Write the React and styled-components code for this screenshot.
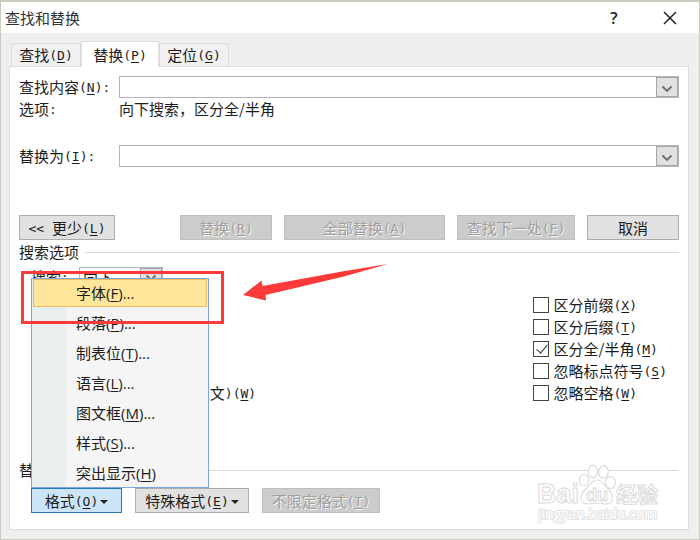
import React, { useState } from 'react';
import styled, { createGlobalStyle } from 'styled-components';

const FIND_OPTIONS = [
    { id: 'prefix', label: '区分前缀', hotkey: 'X' },
    { id: 'suffix', label: '区分后缀', hotkey: 'T' },
    { id: 'width', label: '区分全/半角', hotkey: 'M' },
    { id: 'punct', label: '忽略标点符号', hotkey: 'S' },
    { id: 'space', label: '忽略空格', hotkey: 'W' },
];

const MENU_ITEMS = [
    { label: '字体', hotkey: 'F', more: true },
    { label: '段落', hotkey: 'P', more: true },
    { label: '制表位', hotkey: 'T', more: true },
    { label: '语言', hotkey: 'L', more: true },
    { label: '图文框', hotkey: 'M', more: true },
    { label: '样式', hotkey: 'S', more: true },
    { label: '突出显示', hotkey: 'H' },
];

const Hotkey = ({ children }) => (
    <Latin>(<u>{children}</u>)</Latin>
);

const Combo = ({ id }) => (
    <StyledCombo>
        <input id={id} type="text" />
        <button type="button" aria-label="展开">
            <Chevron />
        </button>
    </StyledCombo>
);

const Chevron = () => (
    <svg width="12" height="8" viewBox="0 0 12 8">
        <path d="M1.5 1.5 L6 6 L10.5 1.5" fill="none" stroke="#6b6b6b" strokeWidth="1.8" />
    </svg>
);

const Check = ({ id, checked, onChange, children }) => (
    <StyledCheck>
        <input id={id} type="checkbox" checked={checked} onChange={onChange} />
        <label htmlFor={id}>{children}</label>
    </StyledCheck>
);

const Watermark = () => (
    <StyledWatermark viewBox="0 0 130 62" width="130" height="62">
        <g fill="#fff" stroke="#dcdcdc" strokeWidth="1.2">
            <ellipse cx="47" cy="18" rx="4.6" ry="6" />
            <ellipse cx="56" cy="9.5" rx="4.6" ry="6.3" />
            <ellipse cx="66.5" cy="10" rx="4.8" ry="6.3" />
            <ellipse cx="73.5" cy="20.5" rx="5" ry="6" />
            <path d="M60 18 C54 18 52 25 48 28 C42 33 43 42 51 42 C55 42 57 41 60 41 C64 41 65 42 69 42 C77 42 77 33 72 28 C68 25 66 18 60 18 Z" />
        </g>
        <g fill="#fff" stroke="#dadada" strokeWidth="1" fontWeight="700">
            <text x="0" y="41" fontSize="27" fontFamily="Liberation Sans, sans-serif">Bai</text>
            <text x="49" y="39" fontSize="18" fontFamily="Liberation Sans, sans-serif">du</text>
            <text x="79" y="40" fontSize="21" fontFamily="Noto Sans CJK SC, sans-serif">经验</text>
        </g>
        <text x="1" y="57" fontSize="14" fontFamily="Open Sans, sans-serif" fill="#fff" stroke="#e2e2e2" strokeWidth="2" paintOrder="stroke">jingyan.baidu.com</text>
    </StyledWatermark>
);

const App = () => {

    const [checked, setChecked] = useState({ width: true });
    const [active, setActive] = useState(0);

    const toggle = (id) => {
        setChecked({ ...checked, [id]: !checked[id] });
    }

    return (
        <Dialog>
            <GlobalStyle />
            <TitleBar>
                <h1>查找和替换</h1>
                <button type="button" aria-label="帮助">?</button>
                <button type="button" aria-label="关闭">
                    <svg width="14" height="14" viewBox="0 0 14 14">
                        <path d="M1 1 L13 13 M13 1 L1 13" stroke="#222" strokeWidth="1.5" />
                    </svg>
                </button>
            </TitleBar>
            <Body>
                <Tabs>
                    <Tab type="button">查找<Hotkey>D</Hotkey></Tab>
                    <Tab type="button" $active>替换<Hotkey>P</Hotkey></Tab>
                    <Tab type="button">定位<Hotkey>G</Hotkey></Tab>
                </Tabs>
                <Panel>
                    <Field>
                        <label htmlFor="find">查找内容<Hotkey>N</Hotkey><Latin>:</Latin></label>
                        <Combo id="find" />
                    </Field>
                    <Summary>
                        <span>选项<Latin>:</Latin></span>
                        <span>向下搜索，区分全/半角</span>
                    </Summary>
                    <Field>
                        <label htmlFor="replace">替换为<Hotkey>I</Hotkey><Latin>:</Latin></label>
                        <Combo id="replace" />
                    </Field>
                    <Actions>
                        <Button type="button" $width={96}><Latin>&lt;&lt; </Latin>更少<Hotkey>L</Hotkey></Button>
                        <Spacer />
                        <Button type="button" $width={92} disabled>替换<Hotkey>R</Hotkey></Button>
                        <Button type="button" $width={161} disabled>全部替换<Hotkey>A</Hotkey></Button>
                        <Button type="button" $width={118} disabled>查找下一处<Hotkey>F</Hotkey></Button>
                        <Button type="button" $width={92}>取消</Button>
                    </Actions>
                    <GroupTitle><h2>搜索选项</h2></GroupTitle>
                    <Direction>
                        <label htmlFor="direction">搜索<Latin>:</Latin></label>
                        <SelectBox>
                            <select id="direction" defaultValue="down">
                                <option value="down">向下</option>
                            </select>
                            <span><Chevron /></span>
                        </SelectBox>
                    </Direction>
                    <Options>
                        <Column>
                            <Check id="forms" checked={!!checked.forms} onChange={() => toggle('forms')}>
                                查找单词的所有形式<Latin>(</Latin>英文<Latin>)</Latin><Hotkey>W</Hotkey>
                            </Check>
                        </Column>
                        <Column>
                            {FIND_OPTIONS.map((option) => (
                                <Check key={option.id} id={option.id} checked={!!checked[option.id]} onChange={() => toggle(option.id)}>
                                    {option.label}<Hotkey>{option.hotkey}</Hotkey>
                                </Check>
                            ))}
                        </Column>
                    </Options>
                    <GroupTitle><h2>替换</h2></GroupTitle>
                    <Formats>
                        <MenuAnchor>
                            <Button type="button" $width={91} $open>格式<Hotkey>O</Hotkey><Caret /></Button>
                            <Menu>
                                {MENU_ITEMS.map((item, i) => (
                                    <MenuItem type="button" key={item.label} $active={i === active} onMouseEnter={() => setActive(i)}>
                                        {item.label}(<u>{item.hotkey}</u>){item.more && '...'}
                                    </MenuItem>
                                ))}
                                <Highlight />
                                <Arrow viewBox="0 0 148 40" width="148" height="40">
                                    <path d="M1 32 L19.5 17.5 L20.5 23 L100 8.5 L146 1 L100 14 L23.5 32 L24 37.5 Z" fill="#fd3a3a" />
                                </Arrow>
                            </Menu>
                        </MenuAnchor>
                        <Button type="button" $width={114}>特殊格式<Hotkey>E</Hotkey><Caret /></Button>
                        <Button type="button" $width={118} disabled>不限定格式<Hotkey>T</Hotkey></Button>
                    </Formats>
                    <Watermark />
                </Panel>
            </Body>
        </Dialog>
    )
}

const GlobalStyle = createGlobalStyle`
    * {
        box-sizing: border-box;
    }
    body {
        margin: 0;
        background: #c9ccbd;
        color: #1c1c1c;
        font: 15px/20px "Noto Sans CJK SC", sans-serif;
    }
    button, input, select {
        font: inherit;
        color: inherit;
        margin: 0;
        padding: 0;
    }
    h1, h2 {
        margin: 0;
        font-size: 15px;
        font-weight: 400;
    }
    svg {
        display: block;
    }
`;
const Latin = styled.span`
    font-family: "DejaVu Sans Mono", monospace;
    font-size: 13px;
    line-height: 16px;
    vertical-align: 1px;
    white-space: pre;
    u {
        text-underline-offset: 2px;
    }
`;
const Dialog = styled.div`
    display: flex;
    flex-direction: column;
    min-height: 100vh;
    border: 1px solid #c9ccbd;
    border-width: 2px 1px 1px;
    background: #efefef;
`;
const TitleBar = styled.header`
    display: flex;
    align-items: center;
    height: 31px;
    padding: 0 15px 0 4px;
    background: #fff;
    >h1{
        flex: 1;
        color: #333;
    }
    >button{
        display: flex;
        align-items: center;
        justify-content: center;
        width: 28px;
        height: 28px;
        margin-left: 28px;
        border: none;
        background: none;
        font: 600 16px "Open Sans", sans-serif;
    }
`;
const Body = styled.main`
    flex: 1;
    display: flex;
    flex-direction: column;
    padding: 8px 10px 9px 8px;
`;
const Tabs = styled.nav`
    display: flex;
    align-items: flex-end;
    padding-left: 2px;
`;
const Tab = styled.button`
    width: ${({ $active }) => ($active ? 78 : 70)}px;
    height: ${({ $active }) => ($active ? 26 : 23)}px;
    margin-bottom: ${({ $active }) => ($active ? -1 : 0)}px;
    border: 1px solid #dcdcdc;
    border-bottom: none;
    background: ${({ $active }) => ($active ? '#fff' : '#f0f0f0')};
    z-index: ${({ $active }) => ($active ? 1 : 0)};
    white-space: nowrap;
`;
const Panel = styled.section`
    position: relative;
    flex: 1;
    padding: 9px 9px 14px;
    border: 1px solid #dcdcdc;
    background: #fff;
`;
const Field = styled.div`
    display: flex;
    align-items: center;
    >label{
        width: 100px;
        white-space: nowrap;
    }
`;
const StyledCombo = styled.div`
    flex: 1;
    display: flex;
    height: 22px;
    border: 1px solid #b4b4bc;
    >input{
        flex: 1;
        min-width: 0;
        border: none;
        outline: none;
        padding: 0 4px;
    }
    >button{
        display: flex;
        align-items: center;
        justify-content: center;
        width: 22px;
        padding-top: 4px;
        border: 1px solid #a6a6aa;
        background: #e1e1e1;
    }
`;
const Summary = styled.div`
    display: flex;
    margin: 1px 0 26px;
    >span:first-child{
        width: 100px;
    }
`;
const Actions = styled.div`
    display: flex;
    gap: 12px;
    margin: 48px 0 2px;
`;
const Spacer = styled.div`
    flex: 1;
`;
const Button = styled.button`
    width: ${({ $width }) => $width}px;
    height: 25px;
    border: 1px solid ${({ $open }) => ($open ? '#2a7ab8' : '#adadad')};
    background: ${({ $open }) => ($open ? '#cce4f7' : '#e1e1e1')};
    line-height: 20px;
    white-space: nowrap;
    &:disabled{
        border-color: #bfbfbf;
        background: #ccc;
        color: #a0a0a0;
        text-shadow: 1px 1px #f4f4f4;
    }
`;
const Caret = styled.span`
    display: inline-block;
    margin-left: 2px;
    vertical-align: 3px;
    border: 4px solid transparent;
    border-top-color: #222;
    border-bottom: none;
`;
const GroupTitle = styled.div`
    display: flex;
    align-items: center;
    gap: 6px;
    &::after{
        content: "";
        flex: 1;
        border-top: 1px solid #dcdcdc;
    }
`;
const Direction = styled.div`
    display: flex;
    padding: 5px 0 0 12px;
    >label{
        width: 48px;
    }
`;
const SelectBox = styled.div`
    display: flex;
    width: 84px;
    height: 22px;
    border: 1px solid #b4b4bc;
    >select{
        flex: 1;
        appearance: none;
        border: none;
        padding: 0 3px;
        background: #fff;
    }
    >span{
        display: flex;
        align-items: center;
        justify-content: center;
        width: 22px;
        border: 1px solid #a6a6aa;
        background: #e1e1e1;
    }
`;
const Options = styled.div`
    display: flex;
    justify-content: space-between;
    padding: 5px 12px 56px;
`;
const Column = styled.div`
    display: flex;
    flex-direction: column;
    justify-content: flex-end;
`;
const StyledCheck = styled.div`
    display: flex;
    align-items: center;
    gap: 5px;
    height: 22px;
    white-space: nowrap;
    >input{
        appearance: none;
        width: 16px;
        height: 16px;
        border: 1px solid #444;
        background: #fff;
    }
    >input:checked::after{
        content: "";
        display: block;
        width: 5px;
        height: 10px;
        margin: 0 0 0 5px;
        border: solid #333;
        border-width: 0 1px 1px 0;
        transform: rotate(40deg);
    }
`;
const Formats = styled.div`
    display: flex;
    gap: 13px;
    padding-left: 12px;
    margin-top: 8px;
`;
const MenuAnchor = styled.div`
    position: relative;
`;
const Menu = styled.div`
    position: absolute;
    left: 0;
    bottom: 100%;
    display: flex;
    flex-direction: column;
    gap: 2px;
    width: 178px;
    border: 1px solid #7ea6dc;
    padding: 0 1px;
    background: linear-gradient(90deg, #e9eeee 34px, #f5f5f5 34px);
`;
const MenuItem = styled.button`
    height: 28px;
    padding-left: 42px;
    border: 1px solid ${({ $active }) => ($active ? '#f0bd62' : 'transparent')};
    background: ${({ $active }) => ($active ? '#ffe69b' : 'transparent')};
    font-family: "Open Sans", "Noto Sans CJK SC", sans-serif;
    text-align: left;
    white-space: nowrap;
    u {
        text-underline-offset: 2px;
    }
`;
const Highlight = styled.div`
    position: absolute;
    top: -8px;
    left: -11px;
    width: 203px;
    height: 53px;
    border: 3px solid #fd3a3a;
    pointer-events: none;
`;
const Arrow = styled.svg`
    position: absolute;
    top: -16px;
    left: 210px;
    pointer-events: none;
`;
const StyledWatermark = styled.svg`
    position: absolute;
    right: 21px;
    bottom: 5px;
`;

export default App;
